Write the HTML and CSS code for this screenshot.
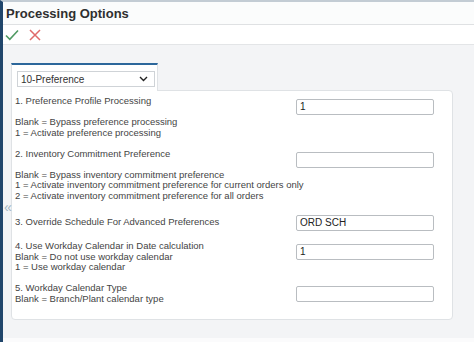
FILE: index.html
```html
<!DOCTYPE html>
<html lang="en">
<head>
    <meta charset="UTF-8">
    <meta name="viewport" content="width=device-width, initial-scale=1.0">
    <title>Processing Options</title>
    <link rel="stylesheet" href="styles.css">
</head>
<body>
    <div class="app">
        <!-- title bar -->
        <div class="titlebar">Processing Options</div>

        <!-- OK / Cancel -->
        <div class="toolbar">
            <svg class="tool-icon" width="14" height="12" viewBox="0 0 14 12">
                <path d="M1 6.5 L4.8 10.3 L13 1.5" fill="none" stroke="#4f9a63" stroke-width="1.6"/>
            </svg>
            <svg class="tool-icon" width="12" height="12" viewBox="0 0 12 12">
                <path d="M1 1 L11 11 M11 1 L1 11" fill="none" stroke="#e06a6a" stroke-width="1.5"/>
            </svg>
        </div>

        <div class="content">
            <div class="collapse">&laquo;</div>

            <div class="tab">
                <div class="select">
                    <span>10-Preference</span>
                    <svg width="9" height="6" viewBox="0 0 9 6">
                        <path d="M1 1 L4.5 4.5 L8 1" fill="none" stroke="#222" stroke-width="1.4"/>
                    </svg>
                </div>
            </div>

            <div class="panel">
                <div class="option">
                    <div class="option-text">
                        1. Preference Profile Processing<br><br>
                        Blank = Bypass preference processing<br>
                        1 = Activate preference processing
                    </div>
                    <div class="field">1</div>
                </div>

                <div class="option">
                    <div class="option-text">
                        2. Inventory Commitment Preference<br><br>
                        Blank = Bypass inventory commitment preference<br>
                        1 = Activate inventory commitment preference for current orders only<br>
                        2 = Activate inventory commitment preference for all orders
                    </div>
                    <div class="field"></div>
                </div>

                <div class="option option-single">
                    <div class="option-text">3. Override Schedule For Advanced Preferences</div>
                    <div class="field">ORD SCH</div>
                </div>

                <div class="option">
                    <div class="option-text">
                        4. Use Workday Calendar in Date calculation<br>
                        Blank = Do not use workday calendar<br>
                        1 = Use workday calendar
                    </div>
                    <div class="field">1</div>
                </div>

                <div class="option">
                    <div class="option-text">
                        5. Workday Calendar Type<br>
                        Blank = Branch/Plant calendar type
                    </div>
                    <div class="field"></div>
                </div>
            </div>
        </div>
    </div>
</body>
</html>
```

FILE: styles.css
```css
body {
    margin: 0;
    font-family: "Liberation Sans", Arial, sans-serif;
    background-color: #ffffff;
    color: #444;
}

.app {
    display: flex;
    flex-direction: column;
    height: 342px;
    border-top: 2px solid #c3ccd4;
    border-left: 3px solid #21466b;
    box-sizing: border-box;
}

.titlebar {
    height: 22px;
    padding-left: 3px;
    display: flex;
    align-items: center;
    font-size: 13px;
    font-weight: bold;
    color: #2f2f2f;
    background-color: #fbfcfc;
    border-bottom: 1px solid #dfe1e3;
}

.toolbar {
    height: 19px;
    display: flex;
    align-items: center;
    gap: 10px;
    padding-left: 2px;
    border-bottom: 1px solid #e3e5e7;
}

.content {
    flex: 1;
    position: relative;
    background-color: #f3f4f6;
    padding: 18px 21px 0 8px;
    border-bottom: 4px solid #fbfbfc;
}

/* side collapse handle */
.collapse {
    position: absolute;
    left: 1px;
    top: 154px;
    font-size: 14px;
    color: #a3b6c4;
}

.tab {
    width: 140px;
    height: 20px;
    background-color: #ffffff;
    border-top: 2px solid #2c679b;
    border-left: 1px solid #dfe2e5;
    border-right: 1px solid #dfe2e5;
    padding: 6px 0 0 5px;
    box-sizing: content-box;
    margin-bottom: -1px;
    position: relative;
}

.select {
    width: 127px;
    height: 14px;
    border: 1px solid #cfd3d7;
    display: flex;
    align-items: center;
    justify-content: space-between;
    padding: 0 6px 0 3px;
    box-sizing: content-box;
    font-size: 10px;
    color: #333;
}

.select span {
    flex: 1;
}

.panel {
    background-color: #ffffff;
    border: 1px solid #dfe2e5;
    border-radius: 0 4px 4px 4px;
    padding: 5px 18px 15px 3px;
    display: flex;
    flex-direction: column;
    gap: 10.5px;
}

.option {
    display: grid;
    grid-template-columns: 1fr 138px;
    align-items: start;
}

.option-text {
    min-width: 0;
    font-size: 9.5px;
    line-height: 10.5px;
    white-space: nowrap;
}

.option-single {
    align-items: center;
    margin-top: 3px;
}

.field {
    height: 14px;
    margin-top: 3px;
    border: 1px solid #b9bdc1;
    border-radius: 2px;
    padding-left: 3px;
    font-size: 10px;
    line-height: 14px;
    color: #222;
}

.option-single .field {
    margin-top: 0;
}
```
